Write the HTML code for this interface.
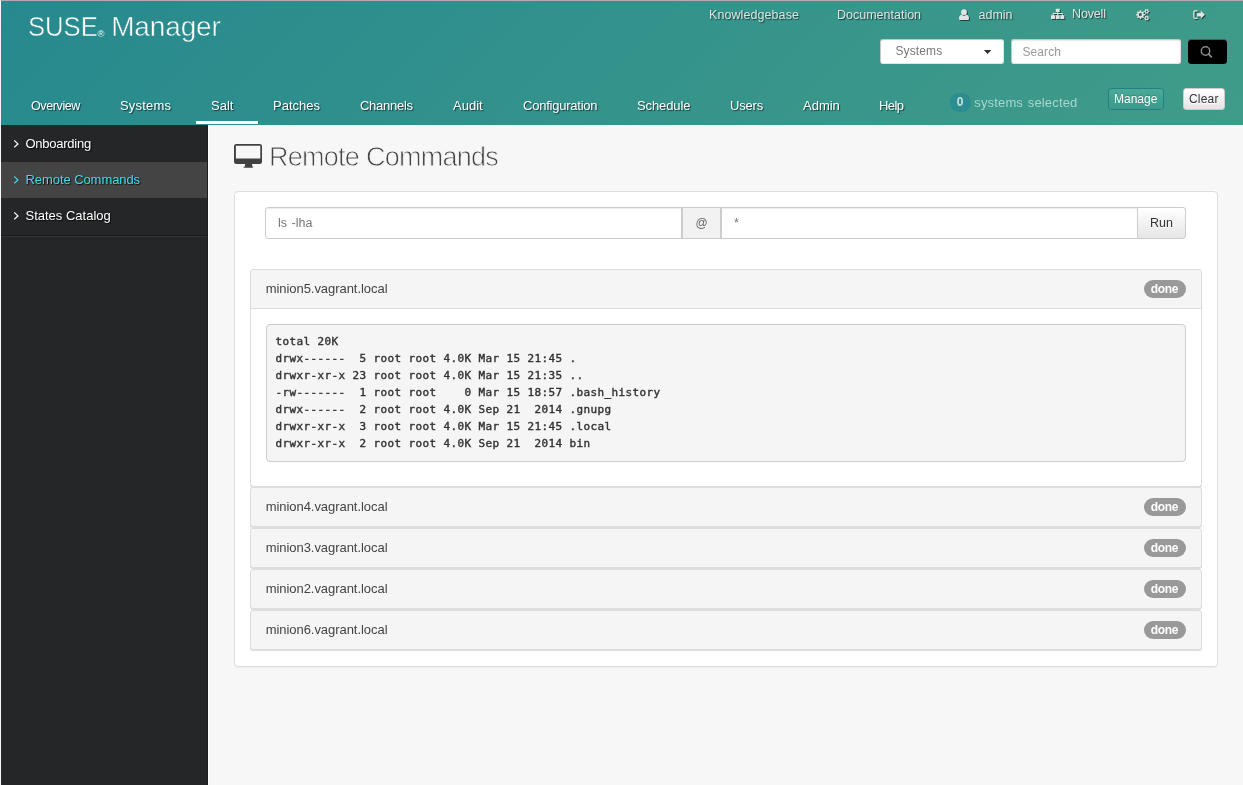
<!DOCTYPE html>
<html lang="en">
<head>
<meta charset="utf-8">
<title>SUSE Manager - Remote Commands</title>
<style>
*{box-sizing:border-box;}
html,body{margin:0;padding:0;}
body{width:1243px;height:785px;overflow:hidden;background:#f7f7f7;font-family:"Liberation Sans",sans-serif;font-size:13px;color:#333;position:relative;}
#wrap{position:absolute;left:0;top:0;width:1243px;height:785px;will-change:transform;}
.abs{position:absolute;white-space:nowrap;}
#topline{left:1px;top:0;width:1242px;height:1px;background:#b3acac;}
#leftline{left:0;top:0;width:1px;height:785px;background:#fbf7f7;}
#header{left:1px;top:1px;width:1242px;height:124px;background:linear-gradient(135deg,#27898e 0%,#409c89 100%);}
#header .t{position:absolute;white-space:nowrap;line-height:1;}
.logo{top:12px;font-size:28px;color:#fff;transform-origin:0 0;-webkit-text-stroke:.5px #28898d;}
#sel{left:879px;top:38px;width:124px;height:25px;background:#fff;border:1px solid;border-color:#c6c6c6 #e8e2e2 #e8e2e2 #c6c6c6;border-radius:3px;}
#sel span{position:absolute;left:14.400px;top:5px;line-height:1;font-size:12px;color:#777;letter-spacing:.13px;}
#sel svg{position:absolute;left:102px;top:8.600px;}
#srch{left:1010px;top:38px;width:170px;height:25px;background:#fff;border:1px solid;border-color:#c6c6c6 #e8e2e2 #e8e2e2 #c6c6c6;border-radius:3px;box-shadow:inset 0 1px 1px rgba(0,0,0,.08);}
#srch span{position:absolute;left:10.400px;top:6px;line-height:1;font-size:12px;color:#999;letter-spacing:.12px;}
#sbtn{left:1187px;top:38px;width:39px;height:25px;background:#000;border-radius:3.500px;box-shadow:inset 0 1px 0 rgba(255,255,255,.35);}
#badge{left:949px;top:92px;width:21px;height:18.500px;border-radius:9.250px;background:#2c8d90;}
#badge b{position:absolute;left:0;width:20px;text-align:center;top:3px;line-height:1;font-size:12px;color:#c2e5de;}
#ssel{font-size:13px;color:#a9d6cf;letter-spacing:.15px;word-spacing:1px;margin-left:.3px;}
#manage{left:1107px;top:87px;width:56px;height:22px;background:linear-gradient(#49aa97,#3a9a8b);border:1px solid #277f84;border-radius:3.500px;}
#manage span{position:absolute;left:5px;top:4px;line-height:1;font-size:12px;color:#fff;text-shadow:0 -1px 0 rgba(0,0,0,.2);}
#clear{left:1182px;top:87px;width:42px;height:22px;background:linear-gradient(#fff,#e4e4e4);border:1px solid #ccc;border-radius:3px;}
#clear span{position:absolute;left:5px;letter-spacing:.2px;top:4px;line-height:1;font-size:12px;color:#333;text-shadow:0 1px 0 #fff;}
.toplink{color:#dfe4e2;font-size:12.5px;text-shadow:1px 1px 1px rgba(0,0,0,.55);}
.nav{color:#fff;font-size:13px;text-shadow:1px 1px 1px rgba(0,0,0,.6);top:98px;}
.ic{filter:drop-shadow(1px 1px .6px rgba(0,0,0,.55));}
#saltbar{left:195px;top:120px;width:62px;height:3px;background:#fff;}
#sidebar{left:1px;top:125px;width:206px;height:660px;background:#252628;}
#sideline{left:207px;top:125px;width:1px;height:660px;background:#1c1d1e;}
#sidewhite{left:208px;top:125px;width:1px;height:660px;background:#fdfdfd;}
.sitem{left:0;width:206px;height:36px;}
.sitem span{position:absolute;left:24.5px;top:11px;line-height:1;font-size:13px;color:#fff;text-shadow:1px 1px 1px rgba(0,0,0,.8);white-space:nowrap;}
.sitem svg{position:absolute;left:10.8px;top:13px;}
.sitem.active{background:#444;}
.sitem.active span{color:#40dbeb;}
#sidesep1{left:0;top:110px;width:206px;height:1px;background:#1a1a1b;}
#sidesep2{left:0;top:111px;width:206px;height:1px;background:#343536;}

#ticon{left:234px;top:144px;}
#title{left:269px;top:144px;font-size:27px;line-height:1;color:#444;letter-spacing:-.73px;-webkit-text-stroke:.8px #f7f7f7;}
#outer{left:234px;top:191px;width:984px;height:476px;background:#fff;border:1px solid #ddd;border-radius:4px;box-shadow:0 1px 1px rgba(0,0,0,.05);}
.inp{top:207px;height:32px;background:#fff;border:1px solid #ccc;box-shadow:inset 0 1px 1px rgba(0,0,0,.075);}
.inp span{position:absolute;top:9px;line-height:1;font-size:12.5px;color:#777;}
#in1{left:265px;width:417px;border-radius:3px 0 0 3px;}
#at{left:681px;top:207px;width:41px;height:32px;background:#f2f2f2;border:1px solid #ccc;border-width:1px 2px;text-align:center;line-height:30px;font-size:12px;color:#666;}
#in2{left:722px;width:416px;border-left:0;}
#run{left:1137px;top:207px;width:49px;height:32px;border:1px solid #ccc;border-radius:0 3px 3px 0;background:linear-gradient(#fff,#e6e6e6);}
#run span{position:absolute;left:12px;top:9px;line-height:1;font-size:12.5px;color:#333;text-shadow:0 1px 0 #fff;}
.pnl{left:250px;width:952px;height:40px;background:#f5f5f5;border:1px solid #ddd;border-radius:3px;box-shadow:0 1px 0 rgba(0,0,0,.13);}
.pnl .h{position:absolute;left:14.700px;top:12px;line-height:1;font-size:13px;color:#444;letter-spacing:-.05px;white-space:nowrap;}
.pnl .b{position:absolute;left:893px;top:10px;width:42px;height:18px;border-radius:9px;background:#999;}
.pnl .b b{position:absolute;left:-.6px;width:42px;text-align:center;top:3px;line-height:1;font-size:12px;color:#fff;letter-spacing:-.3px;}
#p1{top:269px;height:218px;background:#fff;}
#p1 .hd{position:absolute;left:0;top:0;width:950px;height:39px;background:#f5f5f5;border-bottom:1px solid #ddd;border-radius:3px 3px 0 0;}
#pre{left:266px;top:324px;width:920px;height:138px;background:#f5f5f5;border:1px solid #ccc;border-radius:4px;margin:0;padding:8px 0 0 8.500px;font-family:"DejaVu Sans Mono","Liberation Mono",monospace;font-size:11px;line-height:17px;letter-spacing:.378px;color:#333;white-space:pre;-webkit-text-stroke:.4px #333;}
</style>
</head>
<body>
<div id="wrap">
<div id="topline" class="abs"></div>
<div id="leftline" class="abs"></div>

<div id="header" class="abs">
  <div id="logo1" class="t logo" style="left:26.600px;transform:scaleX(.915)">SUSE</div>
  <div id="logo2" class="t" style="left:96.500px;top:28px;font-size:9.500px;color:#f0f6f6">®</div>
  <div id="logo3" class="t logo" style="left:110.200px;letter-spacing:-.15px">Manager</div>

  <div id="tl1" class="t toplink" style="left:708px;top:8px;letter-spacing:.08px">Knowledgebase</div>
  <div id="tl2" class="t toplink" style="left:836px;top:8px">Documentation</div>
  <div id="tl3" class="t toplink" style="left:977.5px;top:8px">admin</div>
  <div id="tl4" class="t toplink" style="left:1071px;top:7px;letter-spacing:-.15px">Novell</div>


  <svg class="abs ic" style="left:958px;top:8px" width="11" height="12" viewBox="0 0 11 12"><path fill="#e2e4e3" d="M5 .3a2.900 2.900 0 1 1 0 5.800a2.900 2.900 0 1 1 0-5.800zM2.700 5.700C3.300 6.400 4.100 6.800 5 6.800S6.700 6.400 7.300 5.700C8.900 5.800 10 7 10 9.400C10 10.400 9.400 11 8.500 11H1.500C.6 11 0 10.400 0 9.400C0 7 1.100 5.800 2.700 5.700z"/></svg>
  <svg class="abs ic" style="left:1050px;top:7px" width="14" height="12" viewBox="0 0 14 12"><path fill="#e2e4e3" d="M4.800 .8h3.900v3.300H4.800zM6.300 4.100h1v3.100h-1zM1.700 5.100h10v.9h-10zM1.700 5.100h.9v2.100h-.9zM10.800 5.100h.9v2.100h-.9zM0 7.200h4v3.700H0zM4.700 7.200h4v3.700h-4zM9.300 7.200h4v3.700h-4z"/></svg>
  <svg class="abs ic" style="left:1134.200px;top:6.200px" width="16" height="14" viewBox="0 0 16 14"><path fill="#e2e4e3" fill-rule="evenodd" d="M8.57 6.81L9.85 7.01L9.85 8.39L8.57 8.59L8.30 9.24L9.06 10.29L8.09 11.26L7.04 10.50L6.39 10.77L6.19 12.05L4.81 12.05L4.61 10.77L3.96 10.50L2.91 11.26L1.94 10.29L2.70 9.24L2.43 8.59L1.15 8.39L1.15 7.01L2.43 6.81L2.70 6.16L1.94 5.11L2.91 4.14L3.96 4.90L4.61 4.63L4.81 3.35L6.19 3.35L6.39 4.63L7.04 4.90L8.09 4.14L9.06 5.11L8.30 6.16ZM3.90 7.70a1.60 1.60 0 1 0 3.20 0a1.60 1.60 0 1 0 -3.20 0ZM13.37 3.74L14.24 3.86L14.24 4.94L13.37 5.06L13.11 5.52L13.44 6.33L12.50 6.87L11.96 6.18L11.44 6.18L10.90 6.87L9.96 6.33L10.29 5.52L10.03 5.06L9.16 4.94L9.16 3.86L10.03 3.74L10.29 3.28L9.96 2.47L10.90 1.93L11.44 2.62L11.96 2.62L12.50 1.93L13.44 2.47L13.11 3.28ZM10.80 4.40a0.90 0.90 0 1 0 1.80 0a0.90 0.90 0 1 0 -1.80 0ZM13.37 10.44L14.24 10.56L14.24 11.64L13.37 11.76L13.11 12.22L13.44 13.03L12.50 13.57L11.96 12.88L11.44 12.88L10.90 13.57L9.96 13.03L10.29 12.22L10.03 11.76L9.16 11.64L9.16 10.56L10.03 10.44L10.29 9.98L9.96 9.17L10.90 8.63L11.44 9.32L11.96 9.32L12.50 8.63L13.44 9.17L13.11 9.98ZM10.80 11.10a0.90 0.90 0 1 0 1.80 0a0.90 0.90 0 1 0 -1.80 0Z"/></svg>
  <svg class="abs ic" style="left:1192px;top:9px" width="13" height="10" viewBox="0 0 13 10"><path fill="#e2e4e3" d="M2.200 .3h2.400v1.300H2.400c-.5 0-.9 .4-.9 .9v4.400c0 .5 .4 .9 .9 .9h2.200v1.300H2.200C1 9.100 .2 8.200 .2 7.100V2.300C.2 1.200 1 .3 2.200 .3zM7.800 .6l4.100 4.100l-4.100 4.100v-2.300H4.100V2.900h3.700z"/></svg>
  <div id="sel" class="abs"><span>Systems</span><svg width="10" height="6" viewBox="0 0 10 6"><path fill="#2e2e2e" d="M.9 .9h7.400l-3.700 4.200z"/></svg></div>
  <div id="srch" class="abs"><span>Search</span></div>
  <div id="sbtn" class="abs"><svg class="abs" style="left:11px;top:6px" width="15" height="15" viewBox="0 0 15 15"><circle cx="6.500" cy="6" r="4.200" fill="none" stroke="#8a8a8a" stroke-width="1.500"/><path d="M9.700 9.200l2.600 2.600" stroke="#8a8a8a" stroke-width="1.800" stroke-linecap="round"/></svg></div>

  <div id="n1" class="t nav" style="top:99px;left:30px;letter-spacing:-.39px;font-size:12.5px">Overview</div>
  <div id="n2" class="t nav" style="left:119px;letter-spacing:.2px">Systems</div>
  <div id="n3" class="t nav" style="left:210px">Salt</div>
  <div id="n4" class="t nav" style="left:272px">Patches</div>
  <div id="n5" class="t nav" style="left:359px;letter-spacing:-.27px">Channels</div>
  <div id="n6" class="t nav" style="left:452px">Audit</div>
  <div id="n7" class="t nav" style="left:522px;letter-spacing:-.23px">Configuration</div>
  <div id="n8" class="t nav" style="left:636px;letter-spacing:-.1px">Schedule</div>
  <div id="n9" class="t nav" style="left:729px;letter-spacing:-.2px">Users</div>
  <div id="n10" class="t nav" style="left:802px">Admin</div>
  <div id="n11" class="t nav" style="left:878px;letter-spacing:-.6px">Help</div>

  <div id="badge" class="abs"><b>0</b></div>
  <div id="ssel" class="t" style="left:973px;top:95px">systems selected</div>
  <div id="manage" class="abs"><span>Manage</span></div>
  <div id="clear" class="abs"><span>Clear</span></div>
  <div id="saltbar" class="abs"></div>
</div>

<div id="sidebar" class="abs">
  <div class="sitem abs" style="top:1px"><svg width="8" height="10" viewBox="0 0 8 10"><polyline points="2.2,1.4 5.9,4.9 2.2,8.4" fill="none" stroke="#fff" stroke-width="1.3"/></svg><span style="letter-spacing:-.25px">Onboarding</span></div>
  <div class="sitem abs active" style="top:37px"><svg width="8" height="10" viewBox="0 0 8 10"><polyline points="2.2,1.4 5.9,4.9 2.2,8.4" fill="none" stroke="#40dbeb" stroke-width="1.3"/></svg><span style="letter-spacing:-.07px">Remote Commands</span></div>
  <div class="sitem abs" style="top:73px"><svg width="8" height="10" viewBox="0 0 8 10"><polyline points="2.2,1.4 5.9,4.9 2.2,8.4" fill="none" stroke="#fff" stroke-width="1.3"/></svg><span>States Catalog</span></div>
  <div id="sidesep1" class="abs"></div>
  <div id="sidesep2" class="abs"></div>
</div>
<div id="sideline" class="abs"></div>
<div id="sidewhite" class="abs"></div>

<div id="content">
  <svg id="ticon" class="abs" width="28" height="24" viewBox="0 0 28 24"><path fill="#414141" fill-rule="evenodd" d="M2.300 0h23.400A2.300 2.300 0 0 1 28 2.300v15.400A2.300 2.300 0 0 1 25.700 20H2.300A2.300 2.300 0 0 1 0 17.700V2.300A2.300 2.300 0 0 1 2.300 0zM1.900 1.700v12.700h24.400V1.700zM11.200 20h6.700l.500 2.700h.600v1.100H9.600v-1.100h1.100z"/></svg>
  <div id="title" class="abs">Remote Commands</div>
  <div id="outer" class="abs"></div>
  <div id="in1" class="abs inp"><span style="left:12px;word-spacing:1px">ls -lha</span></div>
  <div id="at" class="abs">@</div>
  <div id="in2" class="abs inp"><span style="left:12px">*</span></div>
  <div id="run" class="abs"><span>Run</span></div>

  <div id="p1" class="abs pnl"><div class="hd"></div><span class="h">minion5.vagrant.local</span><div class="b"><b>done</b></div></div>
  <pre id="pre" class="abs"><span id="l1">total 20K</span>
drwx------  5 root root 4.0K Mar 15 21:45 .
drwxr-xr-x 23 root root 4.0K Mar 15 21:35 ..
-rw-------  1 root root    0 Mar 15 18:57 .bash_history
drwx------  2 root root 4.0K Sep 21  2014 .gnupg
drwxr-xr-x  3 root root 4.0K Mar 15 21:45 .local
drwxr-xr-x  2 root root 4.0K Sep 21  2014 bin</pre>
  <div id="p2" class="abs pnl" style="top:487px"><span class="h">minion4.vagrant.local</span><div class="b"><b>done</b></div></div>
  <div id="p3" class="abs pnl" style="top:528px"><span class="h">minion3.vagrant.local</span><div class="b"><b>done</b></div></div>
  <div id="p4" class="abs pnl" style="top:569px"><span class="h">minion2.vagrant.local</span><div class="b"><b>done</b></div></div>
  <div id="p5" class="abs pnl" style="top:610px"><span class="h">minion6.vagrant.local</span><div class="b"><b>done</b></div></div>
</div>
</div>
</body>
</html>
